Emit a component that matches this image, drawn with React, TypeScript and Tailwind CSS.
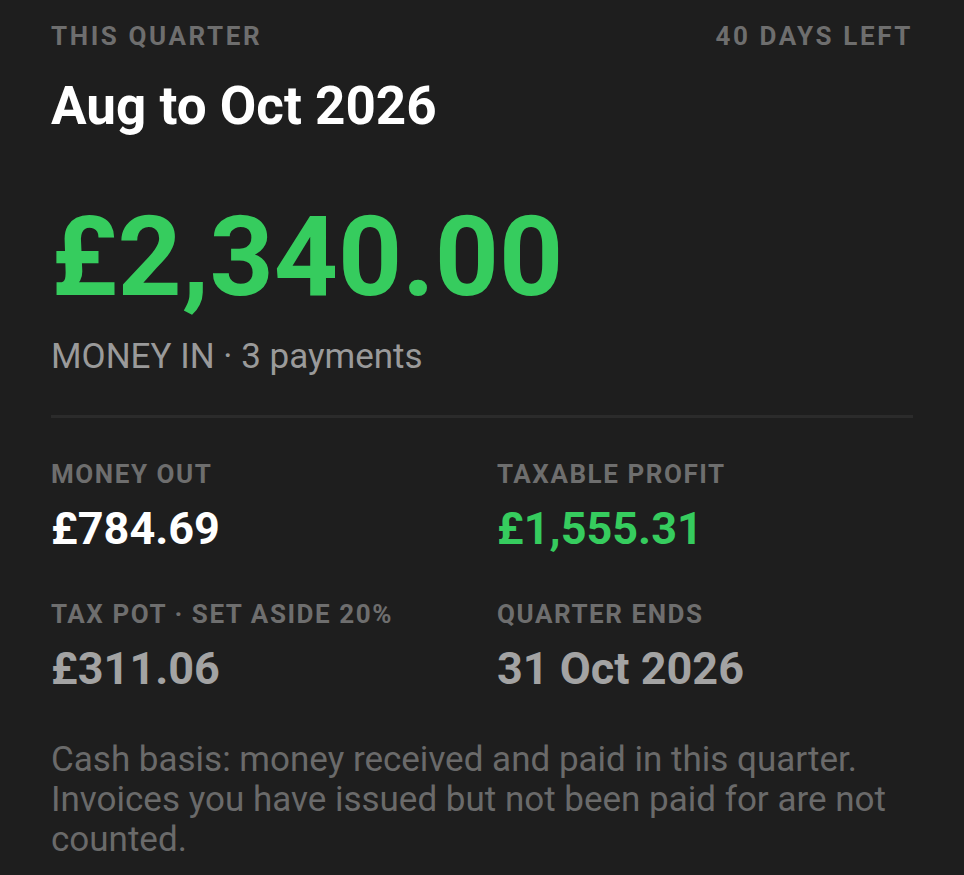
export default function App() {
  return (
    <div className="min-h-[875px] w-full bg-[#1e1e1e] px-[51px] pt-[20px] font-['Roboto',sans-serif]">
      <div className="flex items-center justify-between">
        <span className="text-[26px] leading-[32px] font-bold tracking-[0.1em] text-[#6e6e6e]">THIS QUARTER</span>
        <span className="text-[26px] leading-[32px] font-bold tracking-[0.1em] text-[#6e6e6e]">40 DAYS LEFT</span>
      </div>
      <h1 className="mt-[24px] text-[53px] leading-[60px] font-bold text-white">Aug to Oct 2026</h1>
      <div className="mt-[65px] text-[112px] leading-[112px] font-bold text-[#36cc5e]">£2,340.00</div>
      <div className="mt-[24px] text-[35px] leading-[40px] text-[#9a9a9a]">MONEY IN · 3 payments</div>
      <div className="mt-[38px] h-[3px] bg-[#2b2b2b]" />
      <div className="mt-[40px] grid grid-cols-2 gap-x-[30px]">
        <div>
          <div className="text-[26px] leading-[32px] font-bold tracking-[0.06em] text-[#6e6e6e]">MONEY OUT</div>
          <div className="mt-[13px] text-[45px] leading-[52px] font-bold text-white">£784.69</div>
        </div>
        <div>
          <div className="text-[26px] leading-[32px] font-bold tracking-[0.06em] text-[#6e6e6e]">TAXABLE PROFIT</div>
          <div className="mt-[13px] text-[45px] leading-[52px] font-bold text-[#36cc5e]">£1,555.31</div>
        </div>
        <div className="mt-[43px]">
          <div className="text-[26px] leading-[32px] font-bold tracking-[0.06em] text-[#6e6e6e]">TAX POT · SET ASIDE 20%</div>
          <div className="mt-[13px] text-[45px] leading-[52px] font-bold text-[#a3a3a3]">£311.06</div>
        </div>
        <div className="mt-[43px]">
          <div className="text-[26px] leading-[32px] font-bold tracking-[0.06em] text-[#6e6e6e]">QUARTER ENDS</div>
          <div className="mt-[13px] text-[45px] leading-[52px] font-bold text-[#a3a3a3]">31 Oct 2026</div>
        </div>
      </div>
      <p className="mt-[45px] text-[35px] leading-[40px] text-[#6a6a6a]">
        Cash basis: money received and paid in this quarter. Invoices you have issued but not been paid for are not counted.
      </p>
    </div>
  );
}
